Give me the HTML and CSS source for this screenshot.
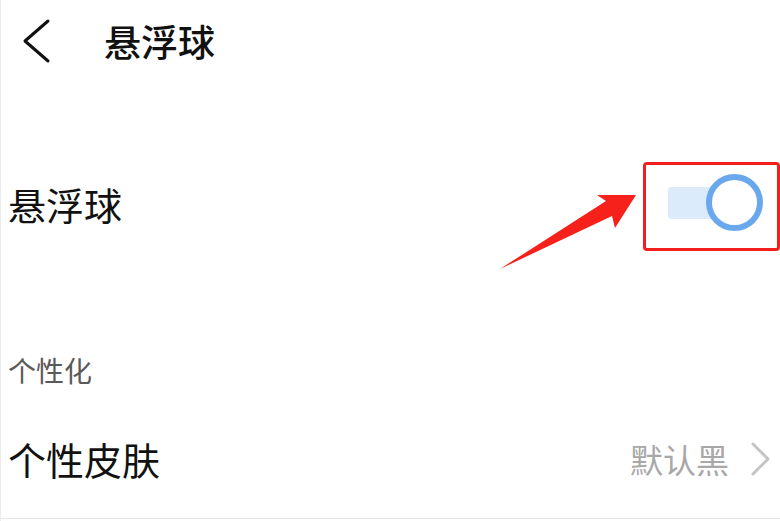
FILE: index.html
```html
<!DOCTYPE html>
<html lang="zh-CN">
<head>
<meta charset="utf-8">
<title>悬浮球</title>
<link rel="stylesheet" href="styles.css">
</head>
<body>
<div class="page">
  <header class="header">
    <svg class="back" width="34" height="46" viewBox="0 0 34 46">
      <polyline points="27,3 4,23 27,43" fill="none" stroke="#111" stroke-width="3" stroke-linecap="round" stroke-linejoin="round"/>
    </svg>
    <h1 class="title">悬浮球</h1>
  </header>

  <div class="row row-switch">
    <span class="row-label">悬浮球</span>
    <div class="mark-box">
      <div class="toggle">
        <div class="track"></div>
        <div class="knob"></div>
      </div>
    </div>
  </div>

  <div class="section-label">个性化</div>

  <div class="row row-skin">
    <span class="row-label">个性皮肤</span>
    <div class="value">
      <span class="value-text">默认黑</span>
      <svg class="chev" width="20" height="34" viewBox="0 0 20 34">
        <polyline points="3,2 18,17 3,32" fill="none" stroke="#c4c4c4" stroke-width="3" stroke-linecap="round" stroke-linejoin="round"/>
      </svg>
    </div>
  </div>

  <svg class="arrow" width="780" height="521" viewBox="0 0 780 521">
    <polygon points="500,269 606,201 597,195 636,195 615,228 612,216" fill="#f5211a"/>
  </svg>
</div>
</body>
</html>
```

FILE: styles.css
```css
html, body {
  margin: 0;
  padding: 0;
  background: #fff;
}
body {
  font-family: "Noto Sans CJK SC", "Noto Sans", sans-serif;
  color: #111;
}
.page {
  position: relative;
  width: 780px;
  height: 521px;
  box-sizing: border-box;
  border-left: 1px solid #ececec;
  overflow: hidden;
}
.header {
  height: 82px;
  display: flex;
  align-items: center;
  padding-left: 20px;
}
.back {
  display: block;
}
.title {
  margin: 0 0 0 49px;
  font-size: 37px;
  font-weight: 500;
  line-height: 40px;
}
.row {
  display: flex;
  align-items: center;
  justify-content: space-between;
  padding-left: 7px;
}
.row-label {
  font-size: 38px;
  line-height: 44px;
}
.row-switch {
  height: 244px;
  padding-right: 0;
}
.mark-box {
  width: 137px;
  height: 89px;
  box-sizing: border-box;
  border: 3px solid #f41f1b;
  border-radius: 4px;
  padding: 9px 0 0 22px;
  margin-top: 5px;
}
.toggle {
  display: flex;
  align-items: center;
  width: 95px;
  height: 57px;
}
.track {
  width: 62px;
  height: 32px;
  background: #dcebfb;
  border-radius: 4px 0 0 4px;
}
.knob {
  width: 57px;
  height: 57px;
  margin-left: -24px;
  box-sizing: border-box;
  border: 6px solid #6aa8ee;
  border-radius: 50%;
  background: #fff;
}
.section-label {
  padding: 30px 0 16px 7px;
  font-size: 28px;
  line-height: 28px;
  color: #5a5a5a;
}
.row-skin {
  height: 119px;
  box-sizing: border-box;
  border-bottom: 1px solid #e6e6e6;
  padding-right: 10px;
}
.value {
  display: flex;
  align-items: center;
  gap: 21px;
}
.value-text {
  font-size: 33px;
  line-height: 40px;
  color: #a8a8a8;
}
.chev {
  display: block;
}
.arrow {
  position: absolute;
  left: -1px;
  top: 0;
  pointer-events: none;
}
```
